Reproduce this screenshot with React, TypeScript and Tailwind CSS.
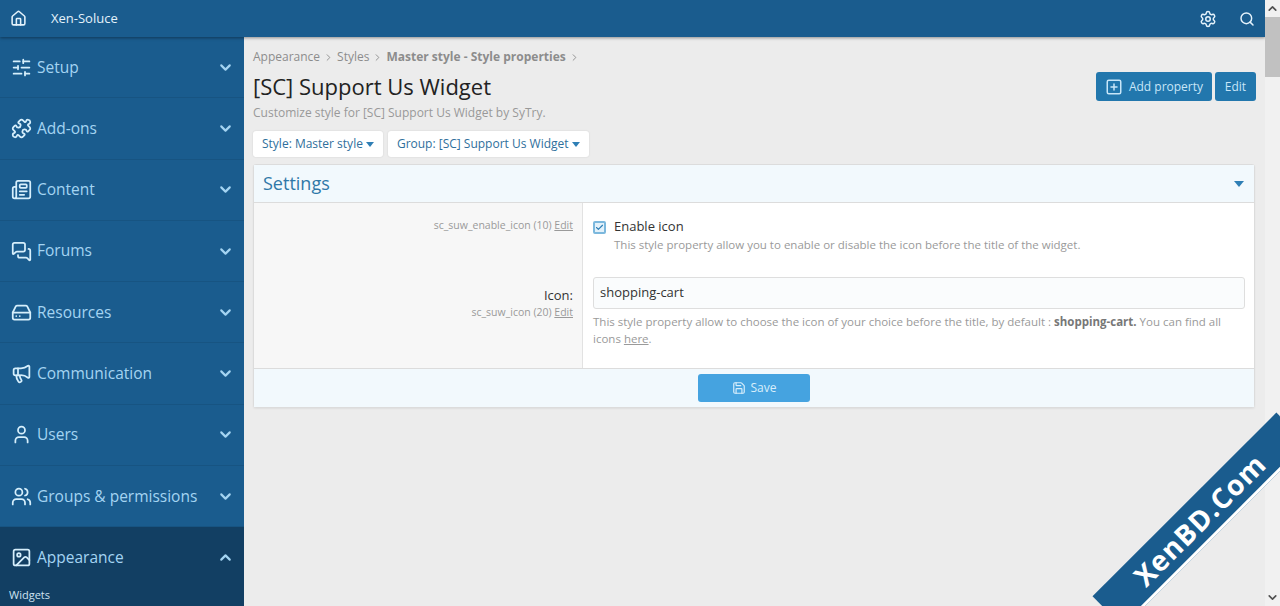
import {
  ChevronDown,
  ChevronUp,
  Home,
  Search,
  SlidersHorizontal,
  Puzzle,
  Newspaper,
  MessagesSquare,
  HardDrive,
  Megaphone,
  User,
  Users,
  Image as ImageIcon,
  ChevronRight,
  SquarePlus,
  Save,
  Check,
  Settings,
} from 'lucide-react';

const navItems = [
  { label: 'Setup', icon: SlidersHorizontal },
  { label: 'Add-ons', icon: Puzzle },
  { label: 'Content', icon: Newspaper },
  { label: 'Forums', icon: MessagesSquare },
  { label: 'Resources', icon: HardDrive },
  { label: 'Communication', icon: Megaphone },
  { label: 'Users', icon: User },
  { label: 'Groups & permissions', icon: Users },
];

function Sidebar() {
  return (
    <aside className="w-[244px] shrink-0 h-[569px] overflow-hidden bg-[#1a5c8e] flex flex-col">
      {navItems.map((item) => (
        <div
          key={item.label}
          className="h-[61.3px] shrink-0 flex items-center pl-[10px] pr-[10px] border-b border-[#175482] text-[#a4d4f2]"
        >
          <span className="w-[22px] flex justify-center text-[#d6effc]">
            <item.icon size={21} strokeWidth={2} />
          </span>
          <span className="ml-[5px] text-[15.5px] flex-1">{item.label}</span>
          <ChevronDown size={17} strokeWidth={3} className="text-[#a4d4f2]" />
        </div>
      ))}
      <div className="flex-1 bg-[#123f63] text-[#a4d4f2]">
        <div className="h-[61px] flex items-center pl-[10px] pr-[10px]">
          <span className="w-[22px] flex justify-center text-[#d6effc]">
            <ImageIcon size={21} strokeWidth={2} />
          </span>
          <span className="ml-[5px] text-[15.5px] flex-1">Appearance</span>
          <ChevronUp size={17} strokeWidth={3} />
        </div>
        <div className="pl-[9px] text-[11px] leading-[14px] text-[#cfe3f1]">Widgets</div>
      </div>
    </aside>
  );
}

function DropButton({ children }: { children: string }) {
  return (
    <div className="h-[26px] bg-white rounded-[3px] flex items-center px-[9px] text-[12px] text-[#2f6f9c] shadow-[0_0_2px_rgba(0,0,0,0.12)]">
      {children}
      <span className="ml-[3px] border-x-[4px] border-t-[5px] border-x-transparent border-t-[#2f7fb5]" />
    </div>
  );
}

export default function App() {
  return (
    <div className="w-[1280px] h-[606px] overflow-hidden flex bg-[#ececec] font-['Open_Sans',sans-serif] relative">
      <div className="flex-1 flex flex-col min-w-0">
        <header className="h-[37px] shrink-0 bg-[#1a5c8e] text-[#e4f2fb] flex items-center pl-[10px] pr-[10px] shadow-[0_1px_3px_rgba(0,0,0,0.4)] z-10">
          <Home size={17} strokeWidth={2.2} />
          <span className="ml-[24px] text-[13px]">Xen-Soluce</span>
          <div className="ml-auto flex items-center gap-[22px]">
            <Settings size={18} strokeWidth={2} />
            <Search size={16} strokeWidth={2.2} />
          </div>
        </header>
        <div className="flex flex-1 min-h-0">
          <Sidebar />
          <main className="flex-1 min-w-0 pl-[9px] pr-[9px] pt-[12px]">
            <div className="flex items-center text-[12px] leading-[16px] text-[#8c8c8c]">
              <span>Appearance</span>
              <ChevronRight size={11} className="mx-[3px]" />
              <span>Styles</span>
              <ChevronRight size={11} className="mx-[3px]" />
              <span className="font-bold">Master style - Style properties</span>
              <ChevronRight size={11} className="mx-[3px]" />
            </div>
            <div className="flex justify-between">
              <div>
                <h1 className="mt-[6px] text-[22px] leading-[30px] text-[#222]">[SC] Support Us Widget</h1>
                <p className="mt-[4px] text-[12px] leading-[16px] text-[#999]">
                  Customize style for [SC] Support Us Widget by SyTry.
                </p>
              </div>
              <div className="flex gap-[3px] mt-[7px]">
                <button className="h-[29px] w-[116px] bg-[#2277ad] rounded-[3px] text-[#c8e6f8] text-[12px] flex items-center justify-center gap-[6px]">
                  <SquarePlus size={18} />
                  Add property
                </button>
                <button className="h-[29px] w-[41px] bg-[#2277ad] rounded-[3px] text-[#c8e6f8] text-[12px]">Edit</button>
              </div>
            </div>
            <div className="flex gap-[5px] mt-[10px]">
              <DropButton>Style: Master style</DropButton>
              <DropButton>Group: [SC] Support Us Widget</DropButton>
            </div>
            <section className="mt-[7px] w-[1002px] bg-white rounded-[3px] border border-[#dcdcdc] shadow-[0_1px_2px_rgba(0,0,0,0.06)]">
              <div className="h-[38px] bg-[#f2f9fd] border-b border-[#dcdcdc] flex items-center justify-between px-[9px]">
                <span className="text-[18px] text-[#2f78a8]">Settings</span>
                <span className="mr-[1px] border-x-[5px] border-t-[6px] border-x-transparent border-t-[#2f7fb5]" />
              </div>
              <div className="flex h-[74px]">
                <div className="w-[329px] shrink-0 bg-[#f7f7f7] border-r border-[#e2e2e2] pr-[9px] pt-[15px] text-right text-[10.5px] leading-[14px] text-[#9a9a9a]">
                  sc_suw_enable_icon (10) <span className="underline">Edit</span>
                </div>
                <div className="pl-[10px] pt-[15px] flex-1">
                  <div className="flex items-center h-[18px]">
                    <span className="w-[13px] h-[13px] border-2 border-[#7cb8dd] bg-[#e3f1fa] rounded-[2px] flex items-center justify-center text-[#2f7fb5]">
                      <Check size={9} strokeWidth={3} />
                    </span>
                    <span className="ml-[8px] text-[13px] text-[#333]">Enable icon</span>
                  </div>
                  <p className="ml-[21px] mt-[1px] text-[11.5px] leading-[16px] text-[#9a9a9a]">
                    This style property allow you to enable or disable the icon before the title of the widget.
                  </p>
                </div>
              </div>
              <div className="flex h-[91px]">
                <div className="w-[329px] shrink-0 bg-[#f7f7f7] border-r border-[#e2e2e2] pr-[9px] pt-[9px] text-right">
                  <div className="text-[13px] leading-[18px] text-[#333]">Icon:</div>
                  <div className="mt-[1px] text-[10.5px] leading-[14px] text-[#9a9a9a]">
                    sc_suw_icon (20) <span className="underline">Edit</span>
                  </div>
                </div>
                <div className="pl-[10px] pr-[9px] flex-1">
                  <div className="h-[32px] bg-[#fafcfd] border border-[#dedede] rounded-[3px] flex items-center px-[6px] text-[13px] text-[#333]">
                    shopping-cart
                  </div>
                  <p className="mt-[4px] text-[11.5px] leading-[17px] text-[#9a9a9a]">
                    This style property allow to choose the icon of your choice before the title, by default :{' '}
                    <b className="text-[#777]">shopping-cart.</b> You can find all icons{' '}
                    <span className="underline">here</span>.
                  </p>
                </div>
              </div>
              <div className="h-[39px] bg-[#f2f9fd] border-t border-[#dcdcdc] flex items-center justify-center">
                <button className="h-[28px] w-[112px] bg-[#45a3e0] rounded-[3px] text-[#d8eefb] text-[12px] flex items-center justify-center gap-[5px]">
                  <Save size={14} />
                  Save
                </button>
              </div>
            </section>
          </main>
        </div>
      </div>
      <div className="w-[15px] shrink-0 bg-[#f1f1f1] flex flex-col items-center justify-between z-20">
        <ChevronUp size={13} strokeWidth={3} className="mt-[2px] text-[#505050]" />
        <ChevronDown size={13} strokeWidth={3} className="mb-[2px] text-[#505050]" />
      </div>
      <div className="absolute left-[1265px] top-[17px] w-[15px] h-[60px] bg-[#c1c1c1] z-20" />
      <div className="absolute left-[1070px] top-[498px] w-[260px] h-[44px] -rotate-[45deg] bg-[#1a5c8e] border-b-[3px] border-white flex items-center justify-center text-white font-bold text-[28px] tracking-[1px] z-30">
        XenBD.Com
      </div>
    </div>
  );
}
